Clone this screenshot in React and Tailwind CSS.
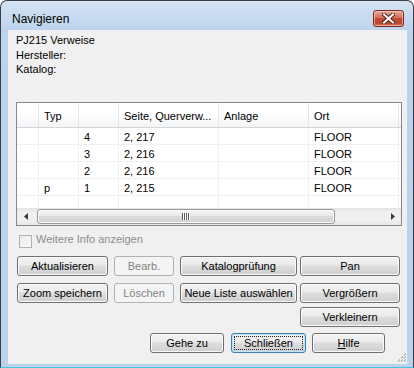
import React from "react";

const font = "font-['Liberation_Sans',Arial,sans-serif]";

function Btn({ children, w, disabled, isDefault }) {
  const base =
    "relative h-[20px] flex items-center justify-center rounded-[3px] border text-[11px] leading-[13px] shrink-0";
  const cls = disabled
    ? "border-[#adb2b5] bg-[#f4f4f4] text-[#838383]"
    : isDefault
    ? "border-[#3c7fb1] bg-[linear-gradient(#f2f2f2,#ebebeb_45%,#dddddd_50%,#cfcfcf)] text-black shadow-[inset_0_0_0_1px_#b8e3f8]"
    : "border-[#707070] bg-[linear-gradient(#f2f2f2,#ebebeb_45%,#dddddd_50%,#cfcfcf)] text-black shadow-[inset_0_0_0_1px_#fafafa]";
  return (
    <div className={`${base} ${cls}`} style={{ width: w }}>
      {isDefault && (
        <span className="absolute inset-[2px] border border-dotted border-[#222]" />
      )}
      <span className="relative">{children}</span>
    </div>
  );
}

const widths = [22, 40, 40, 100, 90, 90];

function HeaderRow() {
  const labels = ["", "Typ", "", "Seite, Querverw...", "Anlage", "Ort"];
  return (
    <div className="flex h-[25px] border-b border-[#d5d5d5] bg-[linear-gradient(#ffffff,#ffffff_40%,#f3f4f6)]">
      {labels.map((l, i) => (
        <div
          key={i}
          className="h-full border-r border-[#e3e6ea] flex items-center pl-[5px] pt-[2px] text-black whitespace-nowrap overflow-hidden"
          style={{ width: widths[i] }}
        >
          {l}
        </div>
      ))}
      <div className="flex-1" />
    </div>
  );
}

function Row({ cells }) {
  return (
    <div className="flex h-[17px] border-b border-[#f0f0f0]">
      {cells.map((c, i) => (
        <div
          key={i}
          className="h-full border-r border-[#f0f0f0] pl-[5px] pt-[3px] leading-[13px] text-black whitespace-nowrap"
          style={{ width: widths[i] }}
        >
          {c}
        </div>
      ))}
      <div className="flex-1" />
    </div>
  );
}

export default function App() {
  const rows = [
    ["", "", "4", "2, 217", "", "FLOOR"],
    ["", "", "3", "2, 216", "", "FLOOR"],
    ["", "", "2", "2, 216", "", "FLOOR"],
    ["", "p", "1", "2, 215", "", "FLOOR"],
  ];
  return (
    <div className={`${font} text-[11px] w-[414px] h-[368px] bg-white`}>
      <div className="w-[414px] h-[368px] flex flex-col rounded-t-[7px] border border-[#3b4048] border-b-[#46c6de] bg-[linear-gradient(#d4e3f4,#bcd3ec_30px,#bad2ec)]">
        {/* Title bar */}
        <div className="h-[29px] flex items-start justify-between pl-[11px] pr-[9px] shrink-0">
          <div className="mt-[11px] text-[12px] leading-[14px] text-black">Navigieren</div>
          <div className="mt-[9px] w-[31px] h-[17px] rounded-[3px] border border-[#7a2a1e] bg-[linear-gradient(#e8a799,#d46e5a_45%,#c24a33_50%,#b9442e_80%,#d77a62)] shadow-[inset_0_0_0_1px_rgba(255,220,210,0.55)] flex items-center justify-center">
            <svg width="13" height="11" viewBox="0 0 13 11">
              <path d="M2 1.5 L11 9.5 M11 1.5 L2 9.5" stroke="#5a2418" strokeWidth="4" strokeLinecap="square" />
              <path d="M2 1.5 L11 9.5 M11 1.5 L2 9.5" stroke="#ffffff" strokeWidth="2" strokeLinecap="square" />
            </svg>
          </div>
        </div>

        {/* Client area */}
        <div className="relative flex-1 ml-[7px] mr-[6px] mb-[3px] bg-[#f0f0f0] flex flex-col">
          <div className="ml-[8px] mt-[3px] text-black leading-[14px]">
            <div>PJ215 Verweise</div>
            <div className="mt-[1px]">Hersteller:</div>
            <div>Katalog:</div>
          </div>

          {/* List view */}
          <div className="ml-[8px] mt-[26px] w-[386px] h-[124px] border border-[#828790] bg-white flex flex-col">
            <HeaderRow />
            {rows.map((r, i) => (
              <Row key={i} cells={r} />
            ))}
            <div className="flex flex-1">
              {widths.map((w, i) => (
                <div key={i} className="h-full border-r border-[#f0f0f0]" style={{ width: w }} />
              ))}
            </div>
            {/* Scrollbar */}
            <div className="h-[17px] flex items-stretch bg-[linear-gradient(#e3e3e3,#efefef_25%,#f0f0f0_75%,#e6e6e6)]">
              <div className="w-[17px] flex items-center justify-center">
                <svg width="4" height="7" viewBox="0 0 4 7">
                  <path d="M4 0 L0 3.5 L4 7 Z" fill="#3a3a3a" />
                </svg>
              </div>
              <div className="ml-[3px] my-[1px] w-[298px] rounded-[3px] border border-[#979797] bg-[linear-gradient(#f4f4f4,#e9e9e9_45%,#dadada_50%,#d2d2d2)] shadow-[inset_0_0_0_1px_#fbfbfb] flex items-center justify-center">
                <svg width="8" height="7" viewBox="0 0 8 7">
                  <rect x="0" y="0" width="1" height="7" fill="#5a5a5a" />
                  <rect x="1" y="0" width="1" height="7" fill="#ffffff" />
                  <rect x="2" y="0" width="1" height="7" fill="#5a5a5a" />
                  <rect x="3" y="0" width="1" height="7" fill="#ffffff" />
                  <rect x="4" y="0" width="1" height="7" fill="#5a5a5a" />
                  <rect x="5" y="0" width="1" height="7" fill="#ffffff" />
                  <rect x="6" y="0" width="1" height="7" fill="#5a5a5a" />
                  <rect x="7" y="0" width="1" height="7" fill="#ffffff" />
                </svg>
              </div>
              <div className="ml-auto w-[17px] flex items-center justify-center">
                <svg width="4" height="7" viewBox="0 0 4 7">
                  <path d="M0 0 L4 3.5 L0 7 Z" fill="#3a3a3a" />
                </svg>
              </div>
            </div>
          </div>

          {/* Checkbox */}
          <div className="ml-[11px] mt-[9px] h-[13px] flex items-start">
            <div className="w-[13px] h-[13px] border border-[#b1b1b1] bg-[linear-gradient(135deg,#ebebeb,#f7f7f7)]" />
            <div className="ml-[4px] -mt-[2px] leading-[13px] text-[#8d8d8d]">Weitere Info anzeigen</div>
          </div>

          {/* Buttons */}
          <div className="ml-[9px] mt-[8px] w-[383px] flex flex-col">
            <div className="flex">
              <Btn w={91}>Aktualisieren</Btn>
              <div className="w-[6px]" />
              <Btn w={60} disabled>Bearb.</Btn>
              <div className="w-[6px]" />
              <Btn w={117}>Katalogprüfung</Btn>
              <div className="w-[3px]" />
              <Btn w={100}>Pan</Btn>
            </div>
            <div className="flex mt-[7px]">
              <Btn w={91}>Zoom speichern</Btn>
              <div className="w-[6px]" />
              <Btn w={60} disabled>Löschen</Btn>
              <div className="w-[6px]" />
              <Btn w={117}>Neue Liste auswählen</Btn>
              <div className="w-[3px]" />
              <Btn w={100}>Vergrößern</Btn>
            </div>
            <div className="flex justify-end mt-[4px]">
              <Btn w={100}>Verkleinern</Btn>
            </div>
            <div className="flex mt-[6px] ml-[133px]">
              <Btn w={74}>Gehe zu</Btn>
              <div className="w-[7px]" />
              <Btn w={75} isDefault>Schließen</Btn>
              <div className="w-[6px]" />
              <Btn w={73}>
                <span className="underline">H</span>ilfe
              </Btn>
            </div>
          </div>

          {/* Resize grip */}
          <svg className="absolute right-[1px] bottom-[1px]" width="11" height="11" viewBox="0 0 11 11">
            {[
              [9, 1], [9, 4], [9, 7], [6, 4], [6, 7], [3, 7],
            ].map(([x, y], i) => (
              <g key={i}>
                <rect x={x} y={y + 1} width="1" height="2" fill="#b7b7b7" />
                <rect x={x + 1} y={y} width="1" height="2" fill="#b7b7b7" />
              </g>
            ))}
          </svg>
        </div>
      </div>
    </div>
  );
}
